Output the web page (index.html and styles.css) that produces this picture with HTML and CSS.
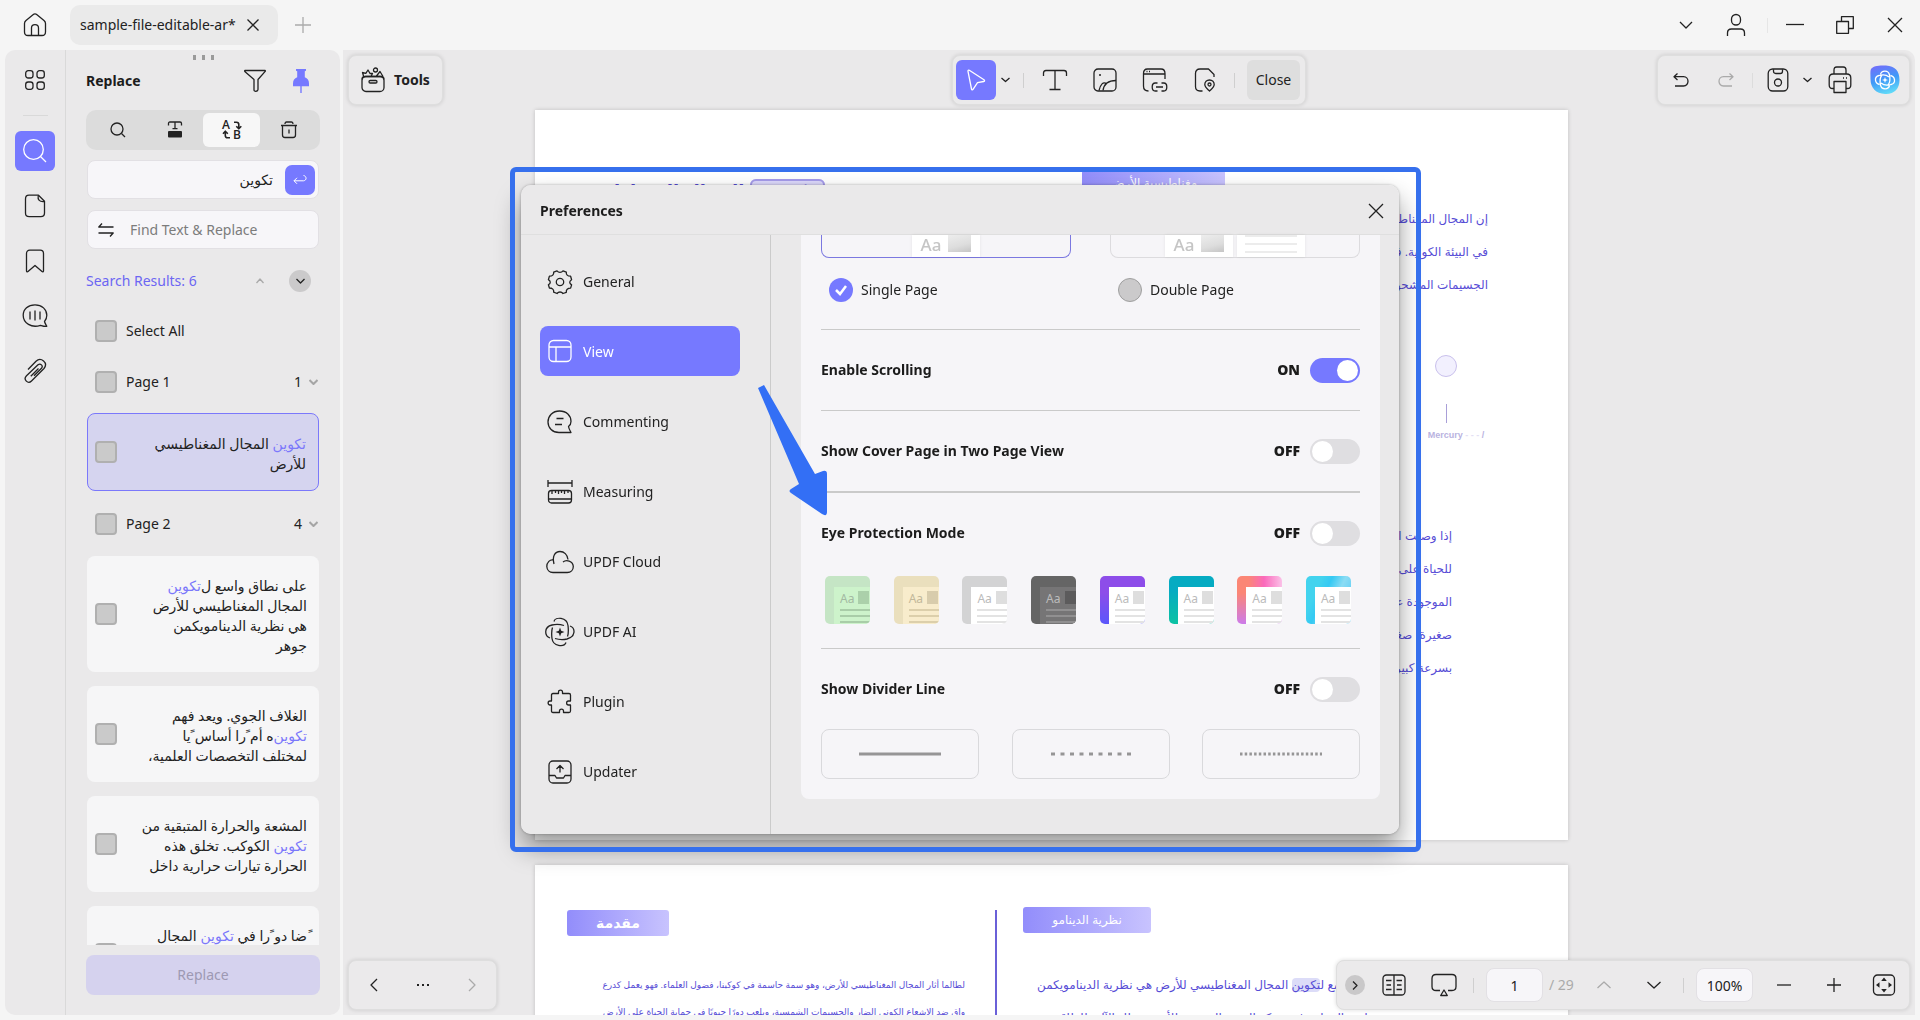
FILE: index.html
```html
<!DOCTYPE html>
<html lang="en">
<head>
<meta charset="utf-8">
<title>sample-file-editable-ar*</title>
<link rel="stylesheet" href="styles.css">
</head>
<body>
<header class="titlebar">
  <button class="win-btn home" aria-label="Home"><svg width="24" height="24" viewBox="0 0 24 24"><path d="M1.500 10.500c0-1.300.5-2.300 1.500-3.100l7-5.700c1.200-1 2.800-1 4 0l7 5.700c1 .8 1.500 1.800 1.500 3.100v8.500c0 2.200-1.300 3.500-3.500 3.500H5c-2.200 0-3.500-1.300-3.500-3.500z"/><path d="M8.500 22v-7c0-4.500 7-4.500 7 0v7"/></svg></button>
  <div class="tab"><span>sample-file-editable-ar*</span><button aria-label="Close tab"><svg width="12" height="12" viewBox="0 0 12 12"><path d="M.5.5l11 11M11.500.5l-11 11"/></svg></button></div>
  <button class="win-btn muted" aria-label="New tab"><svg width="16" height="16" viewBox="0 0 16 16"><path d="M8 0v16M0 8h16"/></svg></button>
  <div class="spacer"></div>
  <button class="win-btn" aria-label="More"><svg width="14" height="8" viewBox="0 0 14 8"><path d="M1 1l6 6 6-6"/></svg></button>
  <button class="win-btn" aria-label="Account"><svg width="20" height="24" viewBox="0 0 20 24"><rect x="5.500" y="1.500" width="9" height="10.500" rx="4.500"/><path d="M1.500 23v-3c0-2.500 1.500-4 4-4h9c2.500 0 4 1.500 4 4v3"/></svg></button>
  <i class="sep title-sep"></i>
  <button class="win-btn" aria-label="Minimize"><svg width="18" height="18" viewBox="0 0 18 18"><path d="M0 8.500h18"/></svg></button>
  <button class="win-btn" aria-label="Restore"><svg width="18" height="18" viewBox="0 0 18 18"><path d="M.7 5.500h11.800v11.800H.7zM5.500 5.500V.7h11.800v11.800h-4.800"/></svg></button>
  <button class="win-btn" aria-label="Close window"><svg width="16" height="16" viewBox="0 0 16 16"><path d="M1 1l14 14M15 1L1 15"/></svg></button>
</header>

<div class="app">
  <aside class="side">
    <nav class="rail">
      <button aria-label="Thumbnails"><svg width="20" height="20" viewBox="0 0 20 20"><rect x=".7" y=".7" width="7.300" height="7.300" rx="2.500"/><rect x="12" y=".7" width="7.300" height="7.300" rx="2.500"/><rect x=".7" y="12" width="7.300" height="7.300" rx="2.500"/><rect x="12" y="12" width="7.300" height="7.300" rx="2.500"/></svg></button>
      <hr>
      <button class="on" aria-label="Search"><svg width="24" height="24" viewBox="0 0 24 24"><circle cx="10.500" cy="10.500" r="9.800"/><path d="M17.500 17.500l5.500 5.500"/></svg></button>
      <button aria-label="Pages"><svg width="22" height="24" viewBox="0 0 22 24"><path d="M5 1.200h9.500l6 6V19c0 2.500-1.200 3.700-3.700 3.700H5.200c-2.500 0-3.700-1.200-3.700-3.700V5c0-2.500 1.200-3.800 3.500-3.800z"/><path d="M14.200 1.500c-.8 4.500 1.500 6.500 6 6"/></svg></button>
      <button aria-label="Bookmarks"><svg width="20" height="24" viewBox="0 0 20 24"><path d="M1.500 22V4.500c0-2 1.200-3.300 3.300-3.300h10.400c2.100 0 3.300 1.300 3.300 3.300V22c0 .8-.8 1.200-1.500.6L10 16.500l-7 6.100c-.7.600-1.500.2-1.500-.6z"/></svg></button>
      <button aria-label="Comments"><svg width="26" height="24" viewBox="0 0 26 24"><path d="M22.500 17.500c.4 1.800 1.400 3.200 2.300 4.800-2.300.4-4.300-.4-6.300-1-9 3-17.300-2-17.300-10C1.200 5 6 .9 13 .9s11.800 4.500 11.800 10.300c0 2.500-.8 4.600-2.300 6.300z"/><path d="M8 7.500v8M13 6.500v10M18 7.500v8"/></svg></button>
      <button aria-label="Attachments"><svg width="24" height="26" viewBox="0 0 24 26"><path d="M5 11.500L13 3.200C18-1.500 25.500 5 21 10.500L8.500 23C5 26.500-.2 21.500 3.500 17.800L15 6.800c2.500-2 5.500 1 3.500 3.500l-7.500 7.500"/><path d="M7.800 18.300L15.500 10.500"/></svg></button>
    </nav>
    <section class="panel">
      <div class="grip"><i></i><i></i><i></i></div>
      <div class="panel-head">
        <h2>Replace</h2>
        <button aria-label="Filter"><svg width="22" height="24" viewBox="0 0 22 24"><path d="M1 1.500h20c.4 0 .5.500.2.900L14 10.500v10c0 2-4 2.500-4 .5V10.500L.8 2.400c-.3-.4-.2-.9.200-.9z"/></svg></button>
        <button class="pin" aria-label="Pin panel"><svg width="18" height="26" viewBox="0 0 18 26"><path class="solid" d="M4 1h10v1.800l-1.200.5v6c2.700 1 4.200 3.200 4.200 6.200v2.700H1v-2.700c0-3 1.500-5.200 4.200-6.200v-6L4 2.800zM8.300 18h1.400v7H8.300z"/></svg></button>
      </div>
      <div class="segments">
        <button aria-label="Find"><svg width="16" height="16" viewBox="0 0 16 16"><circle cx="7" cy="7" r="6"/><path d="M11.500 11.500L15 15"/></svg></button>
        <button aria-label="Redact"><svg width="16" height="18" viewBox="0 0 16 18"><path d="M1.500 4.500v-2C1.500 1.500 2 1 3 1h10c1 0 1.500.5 1.500 1.500v2M8 1v6.500M5.500 7.700h5"/><rect class="solid" x="1" y="10" width="14" height="6.500" rx="1"/></svg></button>
        <button class="on" aria-label="Replace"><svg class="swap" width="20" height="20" viewBox="0 0 20 20"><text x="0" y="9">A</text><text x="11" y="19">B</text><path d="M12 2.200h2.500c1.600 0 2.300.7 2.300 2.300v4M14.300 6.300l2.500 2.500 2.500-2.500M1 13.700l2.300-2.500 2.500 2.500M3.300 11.500V15.500c0 1.600.7 2.300 2.300 2.300H8"/></svg></button>
        <button aria-label="Delete"><svg width="18" height="18" viewBox="0 0 18 18"><path d="M1 4.500h16M5 3c0-1.200.5-2 1.500-2h5c1 0 1.500.8 1.500 2M2.500 4.500V14c0 1.700.7 2.500 2.500 2.500h8c1.800 0 2.500-.8 2.500-2.500V4.500M9 8.500v4"/></svg></button>
      </div>
      <div class="field">
        <input type="text" dir="rtl" lang="ar" aria-label="Find text" value="تكوين">
        <button aria-label="Search"><svg width="14" height="12" viewBox="0 0 14 12"><path d="M10.500 1.500c3.300.5 3.500 5 0 5.300H1M4 3.800l-3 3 3 3"/></svg></button>
      </div>
      <div class="field second">
        <svg width="16" height="14" viewBox="0 0 16 14"><path d="M4 .5L.8 4h14.700M12 13.500l3.200-3.500H.5"/></svg>
        <input type="text" aria-label="Replacement text" placeholder="Find Text &amp; Replace">
      </div>
      <div class="summary">
        <span>Search Results: 6</span>
        <button class="muted" aria-label="Previous result"><svg width="8" height="6" viewBox="0 0 8 6"><path d="M.5 5L4 1l3.500 4"/></svg></button>
        <button class="next" aria-label="Next result"><svg width="9" height="6" viewBox="0 0 9 6"><path d="M.5 1l4 4 4-4"/></svg></button>
      </div>
      <div class="results">
        <label class="group all"><input type="checkbox"><span>Select All</span></label>
        <label class="group"><input type="checkbox"><span>Page 1</span><b>1</b><svg width="9" height="6" viewBox="0 0 9 6"><path d="M.5 1l4 4 4-4"/></svg></label>
        <label class="hit current"><input type="checkbox"><span dir="rtl" lang="ar"><mark>تكوين</mark> المجال المغناطيسي<br>للأرض</span></label>
        <label class="group"><input type="checkbox"><span>Page 2</span><b>4</b><svg width="9" height="6" viewBox="0 0 9 6"><path d="M.5 1l4 4 4-4"/></svg></label>
        <label class="hit"><input type="checkbox"><span dir="rtl" lang="ar">على نطاق واسع ل&zwnj;<mark>تكوين</mark><br>المجال المغناطيسي للأرض<br>هي نظرية الدينامويكمن<br>جوهر</span></label>
        <label class="hit"><input type="checkbox"><span dir="rtl" lang="ar">الغلاف الجوي. ويعد فهم<br><mark>تكوين</mark>&zwnj;ه أم ًرا أساس ًيا<br>لمختلف التخصصات العلمية،</span></label>
        <label class="hit"><input type="checkbox"><span dir="rtl" lang="ar">المشعة والحرارة المتبقية من<br><mark>تكوين</mark> الكوكب. تخلق هذه<br>الحرارة تيارات حرارية داخل</span></label>
        <label class="hit"><input type="checkbox"><span dir="rtl" lang="ar"> ًضا دو ًرا في <mark>تكوين</mark> المجال<br>المغناطيسي للأرض<br>جوهر</span></label>
      </div>
      <button class="replace" disabled>Replace</button>
    </section>
  </aside>

  <main class="work">
    <div class="pages">
      <article class="page first" dir="rtl" lang="ar">
        <div class="col wide">
          <div class="badge low">مغناطيسية الأرض</div>
          <p>إن المجال المغناطيسي للأرض أمر ضروري<br>في البيئة الكونية. فهو يحمي كوكبنا<br>الجسيمات المشحونة القادمة</p>
          <div class="planet"><i></i><b></b><span dir="ltr">Mercury<em> - - - </em>/</span></div>
          <p class="inset">إذا وصلت الجسيمات<br>للحياة على الأرض<br>الموجودة على سطح<br>صغيرة، صغيرة جدا<br>بسرعة كبيرة</p>
        </div>
        <div class="col">
          <h1><mark>تكوين</mark> المجال المغناطيسي</h1>
        </div>
      </article>
      <article class="page second-page" dir="rtl" lang="ar">
        <div class="col wide">
          <div class="badge">نظرية الدينامو</div>
          <p>على نطاق واسع ل<mark>تكوين</mark> المجال المغناطيسي للأرض هي نظرية الدينامويكمن<br>جوهر نظرية الدينامو في حركة الحديد المنصهر للأرض. تظل الآلية للطاقة</p>
        </div>
        <div class="col ruled">
          <div class="badge small">مقدمة</div>
          <p>لطالما أثار المجال المغناطيسي للأرض، وهو سمة حاسمة في كوكبنا، فضول العلماء. فهو يعمل كدرع<br>واق ضد الإشعاع الكوني الضار والجسيمات الشمسية، ويلعب دورًا حيويًا في حماية الحياة على الأرض</p>
        </div>
      </article>
    </div>

    <button class="float tools"><svg width="24" height="26" viewBox="0 0 24 26"><rect x="1" y="9.500" width="22" height="15" rx="4"/><path d="M1 12.500c0-2 1-3 3-3h16c2 0 3 1 3 3M2.500 9L1.500 5.500l3.300.8L7 3l2 3.500 2.500 0L10 9.500M15.500 9l3.500-4.500L22 9.500"/><circle cx="14.500" cy="3" r="2"/><rect x="8" y="13.500" width="8" height="2.500" rx="1.200"/></svg>Tools</button>

    <div class="float edit">
      <button class="sq on" aria-label="Select"><svg width="20" height="22" viewBox="0 0 20 22"><path d="M2 2.300c-.2-1 .5-1.400 1.300-1l14.700 9.500c.9.600.7 1.500-.3 1.700l-6.200 1.200-4.300 6.500c-.6.900-1.500.8-1.700-.2z"/></svg></button>
      <button class="tiny" aria-label="Selection options"><svg width="9" height="6" viewBox="0 0 9 6"><path d="M.5 1l4 3.500 4-3.500"/></svg></button>
      <i class="sep"></i>
      <button class="ib" aria-label="Text"><svg width="26" height="22" viewBox="0 0 26 22"><path d="M1.500 7V4c0-1.500.8-2.500 2.500-2.500h18c1.700 0 2.500 1 2.500 2.500v3M13 1.500v19M7.500 20.500h11"/></svg></button>
      <button class="ib" aria-label="Image"><svg width="24" height="24" viewBox="0 0 24 24"><rect x="1" y="1" width="22" height="22" rx="4"/><circle class="solid" cx="7" cy="7" r="1"/><path d="M6 22.500c1.500-6 4-9.500 8-6.500M10 22.500c1-7 5-10 13-10"/></svg></button>
      <button class="ib" aria-label="Link"><svg width="26" height="24" viewBox="0 0 26 24"><path d="M6.500 23C3 23 1.500 21.500 1.500 18V5.500c0-3 1.200-4.500 4-4.500h13.500c2.800 0 4 1.500 4 4.500V11M1.500 6h21.500M4.500 3.500h1M7 3.500h1M15.500 15h-2.300c-2 0-3 1-3 4s1 4 3 4h2.300M19.500 15h2.300c2 0 3 1 3 4s-1 4-3 4h-2.300M14 19h7"/></svg></button>
      <button class="ib" aria-label="Sticker"><svg width="22" height="24" viewBox="0 0 22 24"><path d="M8.500 23H6c-3 0-4.500-1.500-4.500-4.500V5.500C1.500 2.500 3 1 6 1h8.500l5.500 5.500V9M15.500 12c2.800 0 4.700 2 4.700 4.600 0 2.700-2.700 4.500-4.700 6.400-2-1.900-4.700-3.700-4.700-6.400 0-2.600 1.900-4.600 4.700-4.600z"/><circle cx="15.500" cy="16.500" r="1.500"/></svg></button>
      <i class="sep"></i>
      <button class="close-edit">Close</button>
    </div>

    <div class="float actions">
      <button class="ib" aria-label="Undo"><svg width="16" height="14" viewBox="0 0 16 14"><path d="M4.500.5L1 3.700l3.500 3.200M1 3.700h9.500c6 0 6 9.300 0 9.300H2"/></svg></button>
      <button class="ib muted" aria-label="Redo"><svg width="16" height="14" viewBox="0 0 16 14"><path d="M11.500.5L15 3.700l-3.500 3.200M15 3.700H5.500c-6 0-6 9.300 0 9.300H14"/></svg></button>
      <i class="sep"></i>
      <button class="ib" aria-label="Save"><svg width="22" height="24" viewBox="0 0 22 24"><rect x="1.200" y="1" width="19.600" height="22" rx="4.500"/><path d="M6.500 1.200v2c0 1.500.8 2.300 2.200 2.300h4.600c1.400 0 2.200-.8 2.200-2.300v-2"/><circle cx="11" cy="14.500" r="3.500"/></svg></button>
      <button class="tiny" aria-label="Save options"><svg width="9" height="6" viewBox="0 0 9 6"><path d="M.5 1l4 3.500 4-3.500"/></svg></button>
      <button class="ib print" aria-label="Print"><svg width="24" height="28" viewBox="0 0 24 28"><path d="M6 8V4c0-2 .8-3 2.700-3h6.600c1.900 0 2.700 1 2.700 3v4M6 22.500H4.500c-2.300 0-3.300-1.200-3.300-3.500v-7c0-2.700 1.300-4 4-4h13.600c2.700 0 4 1.300 4 4v7c0 2.300-1 3.500-3.300 3.500H18M6 15.500h12v11H6zM15 12h1M18 12h1"/></svg></button>
      <button class="ib" aria-label="UPDF AI"><svg class="ai" width="30" height="30" viewBox="0 0 30 30"><defs><linearGradient id="aig" x1=".3" y1="0" x2=".6" y2="1"><stop offset="0" stop-color="#7070fa"/><stop offset=".5" stop-color="#3f9af8"/><stop offset="1" stop-color="#62dcf8"/></linearGradient></defs><path class="blob" d="M1 4c2-3 8-4 15-3.500C25 1 29.500 6 29.500 15S24 29.500 15 29 .5 23 .5 14C.5 10 0 6 1 4z"/><g><path d="M10.500 9.500c1-4.500 8-4.500 9 .5.800 4 .3 8-1.500 10M20.500 10.500c4.500 1 6 7.500.5 9-4 1.200-8 .3-10-1.500M19.500 20.500c-1 4.500-8 4.500-9-.5-.8-4-.3-8 1.500-10M9.500 19.500c-4.500-1-6-7.500-.5-9 4-1.200 8-.3 10 1.500"/><path class="star" d="M15 12l.8 2.200 2.200.8-2.200.8L15 18l-.8-2.200L12 15l2.200-.8z"/></g></svg></button>
    </div>

    <div class="float history">
      <button class="ib" aria-label="Back"><svg width="8" height="14" viewBox="0 0 8 14"><path d="M7 1L1 7l6 6"/></svg></button>
      <button class="ib" aria-label="More views"><svg width="14" height="4" viewBox="0 0 14 4"><path class="solid" d="M1 1h2v2H1zM6 1h2v2H6zM11 1h2v2h-2z"/></svg></button>
      <button class="ib muted" aria-label="Forward"><svg width="8" height="14" viewBox="0 0 8 14"><path d="M1 1l6 6-6 6"/></svg></button>
    </div>

    <div class="float status">
      <button class="round" aria-label="Collapse"><svg width="6" height="9" viewBox="0 0 6 9"><path d="M1 .5l4 4-4 4"/></svg></button>
      <button class="ib" aria-label="Reading view"><svg width="24" height="22" viewBox="0 0 24 22"><rect x="1" y="1" width="22" height="20" rx="3.500"/><path d="M12 1v20M4 6.500h5.500M4.500 11h4.500M4 15.500h5.500M14.500 6.500H20M15 11h4.500M14.500 15.500H20"/></svg></button>
      <button class="ib" aria-label="Slideshow"><svg width="26" height="24" viewBox="0 0 26 24"><path d="M9 17.500H5c-2.700 0-4-1.300-4-4V5.500c0-2.700 1.300-4 4-4h16c2.700 0 4 1.300 4 4v8c0 2.700-1.300 4-4 4h-4M13 17l3.300 5.500H9.700z"/></svg></button>
      <i class="sep"></i>
      <input type="text" class="num" aria-label="Page number" value="1">
      <span class="total">/ 29</span>
      <button class="ib muted" aria-label="Previous page"><svg width="14" height="8" viewBox="0 0 14 8"><path d="M.5 7L7 1l6.500 6"/></svg></button>
      <button class="ib" aria-label="Next page"><svg width="14" height="8" viewBox="0 0 14 8"><path d="M.5 1L7 7l6.500-6"/></svg></button>
      <i class="sep"></i>
      <input type="text" class="num zoom" aria-label="Zoom" value="100%">
      <button class="ib" aria-label="Zoom out"><svg width="14" height="14" viewBox="0 0 14 14"><path d="M0 7h14"/></svg></button>
      <button class="ib" aria-label="Zoom in"><svg width="14" height="14" viewBox="0 0 14 14"><path d="M0 7h14M7 0v14"/></svg></button>
      <button class="ib" aria-label="Fit page"><svg width="24" height="22" viewBox="0 0 24 22"><rect x="1.500" y="1" width="21" height="20" rx="4"/><path class="solid" d="M12 3.500l2.800 3.500H9.200zM12 18.500l2.800-3.500H9.200zM4 11l3.500-2.800v5.600zM20 11l-3.500-2.800v5.600z"/></svg></button>
    </div>
  </main>
</div>

<div class="overlay">
  <div class="dialog-wrap">
    <section class="dialog" role="dialog" aria-labelledby="pref">
      <header><h2 id="pref">Preferences</h2><button aria-label="Close preferences"><svg width="16" height="16" viewBox="0 0 16 16"><path d="M1 1l14 14M15 1L1 15"/></svg></button></header>
      <div class="dialog-body">
        <nav>
          <button><svg width="26" height="26" viewBox="0 0 26 26"><path d="M10 1.800c1.500 2 4.500 2 6 0l3.300 1.400c-.3 2.500 1.200 4 4.300 4l1 3.500c-2.500 1.500-2.500 3.600 0 5.200l-1 3.200c-3 0-4.600 1.600-4.300 4.300L16 24.500c-1.500-2-4.500-2-6 0l-3.300-1.300c.3-2.600-1.300-4.200-4.300-4.200l-1-3.200c2.500-1.500 2.500-3.700 0-5.200l1-3.400c3 0 4.600-1.600 4.300-4z"/><circle cx="13" cy="13" r="3.700"/></svg>General</button>
          <button class="on"><svg width="26" height="26" viewBox="0 0 26 26"><rect x="2" y="1.500" width="22" height="21" rx="4.500"/><path d="M2 8h22M9 8v14.500"/></svg>View</button>
          <button><svg width="26" height="26" viewBox="0 0 26 26"><path d="M21.500 17.500c.3 2 1.200 3.800 2.500 6H12C5.500 23.500 1 19 1 13S5.500 2 12.500 2 24 6.500 24 12.500c0 2-.8 3.700-2.500 5z"/><path d="M9.500 9.500h7M8 15.500h7"/></svg>Commenting</button>
          <button><svg width="26" height="26" viewBox="0 0 26 26"><path d="M1 1v7M25 1v7M1 4h24"/><rect x="1.500" y="11.500" width="23" height="12.500" rx="3"/><path d="M2 20h22M5 12v3M8.500 12v2M11.500 12v3M14.500 12v2M17.500 12v3M21 12v2"/></svg>Measuring</button>
          <button><svg width="28" height="26" viewBox="0 0 28 26"><path d="M8 15c-2-8 1-12.500 6-12.500 4 0 7.500 3 8 8M17 13c3-2.500 10-1.500 10.300 4.500 0 3.500-2.500 6-6 6H7c-3.500 0-6-2.500-6.200-6C.8 13.500 4 10 7.500 11"/></svg>UPDF Cloud</button>
          <button><svg width="30" height="30" viewBox="0 0 30 30"><path d="M9 4.500C10-.5 22 0 23 8.500c.5 4 .5 8-.5 11M25 9c5.500 2 6 10.500-3 13-4 1-8 .8-12-.5M21 25.500c-2 5-13 4-14-4-.5-4-.5-8 .5-11M5 21C-.5 19-1.500 10 7 8c4-1 8-.8 12 .5" /><path class="solid" d="M15 10.500l1.200 3.300 3.300 1.200-3.300 1.200L15 19.500l-1.200-3.300-3.300-1.200 3.300-1.200z"/></svg>UPDF AI</button>
          <button><svg width="26" height="26" viewBox="0 0 26 26"><path d="M4.500 6c0-1 .5-1.500 1.500-1.500h5.500V3c0-2.500 4-2.500 4 0v1.500H22c1 0 1.500.5 1.500 1.500v6h-2c-2.500 0-2.500 4 0 4h2v6c0 1-.5 1.500-1.500 1.500h-5.500V22c0-2.500-4-2.500-4 0v1.500H6c-1 0-1.500-.5-1.500-1.500v-6H3c-2.500 0-2.500-4 0-4h1.500z"/></svg>Plugin</button>
          <button><svg width="26" height="26" viewBox="0 0 26 26"><rect x="2" y="2" width="22" height="22" rx="4"/><path d="M2 16.500h6l1.500 2.500h7l1.500-2.500h6M13 13.500V7M9.500 10L13 6.500l3.500 3.500"/></svg>Updater</button>
        </nav>
        <div class="content">
          <div class="card">
            <div class="previews">
              <div class="preview chosen"><div class="sheet"><b>Aa</b><i></i></div></div>
              <div class="preview"><div class="sheet"><b>Aa</b><i></i></div><div class="sheet lines"></div></div>
            </div>
            <div class="choices">
              <label><input type="radio" name="layout" checked><span>Single Page</span></label>
              <label><input type="radio" name="layout"><span>Double Page</span></label>
            </div>
            <label class="row"><span>Enable Scrolling</span><b>ON</b><input type="checkbox" checked></label>
            <label class="row"><span>Show Cover Page in Two Page View</span><b>OFF</b><input type="checkbox"></label>
            <label class="row heavy"><span>Eye Protection Mode</span><b>OFF</b><input type="checkbox"></label>
            <div class="themes">
              <button class="theme green" aria-label="Green"><span>Aa<i></i></span></button>
              <button class="theme sand" aria-label="Sand"><span>Aa<i></i></span></button>
              <button class="theme grey" aria-label="Grey"><span>Aa<i></i></span></button>
              <button class="theme dark" aria-label="Dark"><span>Aa<i></i></span></button>
              <button class="theme violet" aria-label="Violet"><span>Aa<i></i></span></button>
              <button class="theme teal" aria-label="Teal"><span>Aa<i></i></span></button>
              <button class="theme pink" aria-label="Pink"><span>Aa<i></i></span></button>
              <button class="theme sky" aria-label="Sky"><span>Aa<i></i></span></button>
            </div>
            <label class="row"><span>Show Divider Line</span><b>OFF</b><input type="checkbox"></label>
            <div class="dividers">
              <button aria-label="Solid"><svg width="84" height="4" viewBox="0 0 84 4"><path d="M1 2h82"/></svg></button>
              <button aria-label="Dashed"><svg width="84" height="4" viewBox="0 0 84 4"><path d="M2 2h82" stroke-dasharray="4 5.500"/></svg></button>
              <button aria-label="Dotted"><svg width="84" height="4" viewBox="0 0 84 4"><path d="M1 2h82" stroke-dasharray="2.500 2.200"/></svg></button>
            </div>
          </div>
        </div>
      </div>
    </section>
    <div class="callout"></div>
    <svg class="arrow" width="74" height="134" viewBox="0 0 74 134"><path d="M2 4l6-3 51 89 8-3q4-1 4 3v38q0 5-5 2L35 109q-3-2 0-4l8-5z"/></svg>
  </div>
</div>
</body>
</html>
```
FILE: styles.css
```css
* { box-sizing: border-box; }
body {
  margin: 0;
  height: 100vh;
  display: flex;
  flex-direction: column;
  overflow: hidden;
  background: #f5f5f5;
  color: #222;
  font: 14px/20px "Noto Sans", "DejaVu Sans", sans-serif;
}
button, input { font: inherit; color: inherit; }
button {
  display: flex;
  align-items: center;
  justify-content: center;
  padding: 0;
  border: 0;
  background: none;
  flex: none;
}
h1, h2, p { margin: 0; }
i, em { font-style: normal; }
mark { background: none; color: #7b78fb; }
svg { fill: none; stroke: #222; stroke-width: 1.3; stroke-linejoin: round; flex: none; }
svg .solid { fill: #222; stroke: none; }
.muted svg { stroke: #aaa; }
.sep { width: 1px; height: 15px; background: #cfcfcf; flex: none; }
.spacer { flex: 1; }

.titlebar { display: flex; align-items: center; height: 50px; flex: none; }
.win-btn { width: 50px; height: 50px; }
.home { width: 70px; }
.tab {
  display: flex;
  align-items: center;
  justify-content: space-between;
  width: 208px;
  height: 40px;
  padding: 0 19px 0 10px;
  border-radius: 10px;
  background: #eaeaea;
}
.title-sep { margin: 0 2px 0 6px; background: #e6e6e6; }

.app { display: flex; flex: 1; min-height: 0; gap: 3px; padding: 0 5px 5px; }
.side { display: flex; width: 335px; flex: none; border-radius: 10px; background: #eae9ea; }
.rail {
  display: flex;
  flex-direction: column;
  align-items: center;
  gap: 15px;
  width: 61px;
  padding-top: 10px;
  border-right: 1px solid #d9d9d9;
}
.rail button { width: 40px; height: 40px; border-radius: 6px; }
.rail hr { width: 25px; height: 1px; margin: 0; border: 0; background: #d9d9d9; }
.on svg { stroke: #fff; }
.rail .on, .sq.on, .dialog nav .on { background: #7679ff; }

.panel { display: flex; flex-direction: column; flex: 1; min-width: 0; padding: 0 20px 20px; }
.grip { display: flex; justify-content: center; gap: 6px; padding-top: 5px; }
.grip i { width: 3px; height: 5px; background: #9a9a9a; }
.panel-head { display: flex; align-items: center; height: 42px; gap: 14px; padding-right: 3px; }
h2 { flex: 1; font-size: 14px; font-weight: 700; color: #1c1c1c; }
.panel-head button { width: 32px; height: 32px; }
.panel-head .pin .solid { fill: #7679ff; }
.segments { display: flex; height: 40px; margin-top: 8px; padding: 3px; border-radius: 10px; background: #dcdcdc; }
.segments button { flex: 1; border-radius: 6px; }
.segments .on { background: #f7f7f7; }
.segments .on svg { stroke: #222; stroke-width: 1.6; }
.swap { overflow: visible; }
.swap text { fill: #222; stroke: none; font: 600 12px "Open Sans", sans-serif; }
.field {
  display: flex;
  align-items: center;
  height: 39px;
  margin: 10px 1px 0;
  padding: 0 3px 0 10px;
  border: 1px solid #e2e0e4;
  border-radius: 8px;
  background: #f7f6f9;
}
.field input { flex: 1; min-width: 0; padding: 1px 12px 0 0; border: 0; background: none; outline: 0; }
.field button { width: 30px; height: 30px; border-radius: 7px; background: #7679ff; }
.field button svg { stroke: #fff; stroke-width: 1; }
.second { gap: 16px; margin-top: 11px; }
.second input::placeholder { color: #7c7c7c; opacity: 1; }
.summary { display: flex; align-items: center; height: 40px; margin-top: 12px; padding-right: 9px; }
.summary span { flex: 1; color: #6c66f3; }
.summary button { width: 22px; height: 22px; margin-left: 18px; border-radius: 50%; }
.summary .next { background: #cbcacb; }
.results { flex: 1; min-height: 0; overflow: hidden; padding: 0 1px; }
.results input {
  appearance: none;
  width: 22px;
  height: 22px;
  margin: 0 9px 0 0;
  border: 2px solid #b0b0b0;
  border-radius: 4px;
  background: #cacaca;
  flex: none;
}
.group { display: flex; align-items: center; height: 63px; padding: 0 0 0 8px; }
.group.all { height: 60px; margin-bottom: -11px; }
.group span { flex: 1; }
.group b { font-weight: 400; }
.group svg { margin: 0 1px 0 7px; stroke: #a5a5a5; stroke-width: 2; }
.group:nth-child(4) { height: 64px; }
.hit {
  display: flex;
  align-items: center;
  margin-bottom: 14px;
  padding: 18px 12px 18px 8px;
  border-radius: 8px;
  background: #f6f6f7;
}
.hit span { flex: 1; padding-top: 2px; margin-bottom: -2px; white-space: nowrap; }
.current { margin-bottom: 1px; padding-left: 7px; border: 1px solid #7b78fb; background: #d5d4ef; }
.replace { height: 40px; margin-top: 10px; border-radius: 8px; background: #d5d2ee; color: #9d99b3; }

.work { position: relative; flex: 1; min-width: 0; overflow: hidden; border-radius: 0 10px 0 0; background: #eae9ea; }
.pages { display: grid; grid-template-columns: 192fr 1033px 347fr; row-gap: 25px; padding-top: 60px; }
.page {
  grid-column: 2;
  display: grid;
  grid-template-columns: 571px 1fr;
  height: 730px;
  background: #fff;
  box-shadow: 0 0 4px rgba(0, 0, 0, .18);
  color: #574dd6;
  font: 12px/33px "Liberation Sans", "DejaVu Sans", sans-serif;
}
.page p { white-space: nowrap; }
.page .wide { padding-right: 80px; }
.badge {
  display: flex;
  align-items: center;
  justify-content: center;
  width: 128px;
  height: 26px;
  border-radius: 3px;
  background: linear-gradient(90deg, #928dfb, #c8c3fe);
  color: #fff;
  font-size: 12px;
}
.badge.small { width: 102px; font-size: 14px; font-weight: 700; }
.badge.low { width: 143px; margin: 60px 263px 7px 0; }
.planet { display: flex; flex-direction: column; align-items: center; width: 60px; margin: 53px 2px 75px 0; }
.planet i { width: 22px; height: 22px; margin-right: 20px; border: 1px solid #c9c0ec; border-radius: 50%; background: #f2f0fe; }
.planet b { width: 1px; height: 19px; margin: 27px 20px 2px 0; background: #a99fd8; }
.planet span { font-size: 9px; line-height: 20px; font-weight: 700; color: #b9b3df; white-space: nowrap; }
.planet em { color: #e4e0f4; }
.inset { padding-right: 36px; }
h1 { margin: 66px 172px 0 0; font: 700 18px/32px "Liberation Sans", "DejaVu Sans", sans-serif; white-space: nowrap; }
h1 mark { padding: 1px 10px 0; border: 2px solid #a59bea; border-radius: 6px; background: #dcd8fb; color: #574dd6; }
.second-page { padding-top: 42px; }
.second-page .wide { padding-right: 171px; }
.second-page .wide .badge { margin-right: 246px; }
.second-page .wide p { margin-right: -10px; padding-top: 36px; }
.second-page .wide mark { border-radius: 4px; background: #dcdcf8; color: inherit; }
.ruled { margin-top: 3px; padding-right: 30px; border-right: 2px solid #6a60d8; }
.ruled .badge { margin-right: 296px; }
.ruled p { padding-top: 36px; font-size: 9px; line-height: 27px; }

.float {
  position: absolute;
  display: flex;
  align-items: center;
  height: 50px;
  border: 1px solid #dedede;
  border-radius: 8px;
  background: #ebeaeb;
  box-shadow: 0 0 4px rgba(0, 0, 0, .14);
}
.tools { top: 5px; left: 5px; width: 95px; gap: 9px; font-weight: 700; }
.edit { top: 5px; left: 609px; width: 354px; padding-left: 3px; }
.sq { width: 40px; height: 40px; border-radius: 6px; }
.tiny { width: 18px; height: 40px; }
.edit .ib { width: 50px; height: 40px; }
.edit .sep { margin: 0 6px 0 9px; }
.edit .ib + .sep { margin: 0 12px 0 4px; }
.close-edit { width: 53px; height: 40px; border-radius: 6px; background: #dedede; }
.actions { top: 5px; right: 5px; width: 253px; }
.actions .ib { width: 45px; height: 40px; }
.actions .tiny { width: 15px; }
.actions .print { margin-left: 2px; }
.actions .sep { margin: 0 2px 0 4px; background: #dcdcdc; }
.ai .blob { fill: url(#aig); stroke: none; }
.ai { stroke: #fff; }
.ai .star { fill: #fff; stroke: none; }
.history { bottom: 5px; left: 5px; width: 149px; }
.history .ib { width: 49px; height: 40px; }
.status { bottom: 5px; right: 5px; width: 574px; padding-left: 8px; }
.status .ib { width: 50px; height: 40px; }
.round { width: 20px; height: 20px; margin-right: 4px; border-radius: 50%; background: #c9c8c9; }
.status .sep { margin: 0 12px 0 4px; }
.num { width: 57px; height: 34px; padding: 0; border: 1px solid #e2e0e4; border-radius: 8px; background: #f7f6f9; text-align: center; }
.num.zoom { margin-right: 6px; }
.total { width: 36px; padding-left: 6px; color: #aaa; white-space: nowrap; }

.overlay { position: fixed; inset: 0; display: flex; align-items: center; justify-content: center; padding-bottom: 1px; }
.dialog-wrap { position: relative; width: 878px; }
.dialog-wrap::before {
  content: "";
  position: absolute;
  inset: 0;
  border-radius: 10px;
  box-shadow: 0 14px 26px rgba(0, 0, 0, .4), 0 0 3px rgba(0, 0, 0, .3);
}
.dialog { position: relative; overflow: hidden; border-radius: 10px; background: #eae9ea; }
.dialog header { display: flex; align-items: center; height: 50px; padding: 2px 15px 0 19px; border-bottom: 1px solid #dfdfdf; }
.dialog-body { display: flex; }
.dialog nav {
  display: flex;
  flex-direction: column;
  flex: none;
  gap: 20px;
  width: 250px;
  padding: 21px 0 0 19px;
  border-right: 1px solid #cbcbcb;
}
.dialog nav button { justify-content: flex-start; width: 200px; height: 50px; padding-top: 2px; border-radius: 8px; }
.dialog nav svg { width: 40px; margin-right: 3px; }
.dialog nav .on { color: #fff; }
.content { flex: 1; min-width: 0; padding: 0 19px 35px 30px; }
.card { padding: 0 20px 20px; border-radius: 0 0 8px 8px; background: #f6f5f8; }
.previews { display: grid; grid-template-columns: 250px 250px; justify-content: space-between; }
.preview {
  display: flex;
  justify-content: center;
  gap: 4px;
  height: 23px;
  border: 1px solid #dcdbde;
  border-top: 0;
  border-radius: 0 0 8px 8px;
}
.preview.chosen { border-color: #7b78e0; }
.sheet { display: flex; justify-content: center; gap: 7px; width: 68px; background: #fff; box-shadow: 0 0 3px rgba(0, 0, 0, .08); }
.sheet b { font-size: 17px; line-height: 20px; font-weight: 500; color: #c5c5c5; }
.sheet i { width: 23px; height: 17px; background: linear-gradient(165deg, #ededed, #ddd 60%, #c5c5c5); }
.sheet.lines { background: repeating-linear-gradient(#ececec 0 2px, #fff 2px 8px) 50% 0 / 52px 100% no-repeat #fff; }
.choices { display: flex; height: 71px; padding: 0 0 8px; }
.choices label { display: flex; align-items: center; flex: none; width: 289px; padding-left: 8px; }
.choices label + label { width: 250px; }
.choices input { appearance: none; width: 24px; height: 24px; margin: 0 8px 0 0; border: 1px solid #9f9f9f; border-radius: 50%; background: #cbcacb; }
.choices input:checked {
  border: 0;
  background: #7679ff url("data:image/svg+xml,%3Csvg xmlns='http://www.w3.org/2000/svg' width='24' height='24'%3E%3Cpath d='M7 12l4 4 6-8' fill='none' stroke='%23fff' stroke-width='2.500'/%3E%3C/svg%3E");
}
.row { display: flex; align-items: center; height: 81px; border-top: 1px solid #cacaca; color: #1c1c1c; font-weight: 700; }
.row.heavy { height: 82px; border-top-width: 2px; }
.row span { flex: 1; }
.row input {
  appearance: none;
  display: flex;
  width: 50px;
  height: 25px;
  margin: 0 0 0 10px;
  padding: 2px;
  border-radius: 13px;
  background: #dfdee1;
}
.row input::before { content: ""; width: 21px; height: 21px; border-radius: 50%; background: #fff; }
.row input:checked { justify-content: flex-end; background: #7679ff; }
.themes { display: flex; justify-content: space-between; padding: 3px 9px 24px 4px; }
.theme { width: 45px; height: 48px; padding: 11px 0 0 9px; border-radius: 5px; overflow: hidden; background: var(--cover); }
.theme span {
  display: flex;
  gap: 4px;
  width: 36px;
  height: 37px;
  padding: 4px 0 0 6px;
  background: linear-gradient(var(--line), var(--line)) 6px 22px / 30px 2px no-repeat,
    linear-gradient(var(--line), var(--line)) 6px 28px / 30px 2px no-repeat,
    linear-gradient(var(--line), var(--line)) 6px 34px / 30px 2px no-repeat, var(--paper, #fff);
  color: var(--ink, #bbb);
  font-size: 12px;
  line-height: 16px;
  --line: #e3e3e3;
}
.theme i { width: 11px; height: 13px; background: var(--pic, #dedede); flex: none; }
.green { --cover: #c5e5c5; --paper: #cdf3cb; --ink: #a3b9a2; --pic: #abd0aa; }
.green span { --line: #a9cda8; }
.sand { --cover: #eadfbd; --paper: #f8eccc; --ink: #c2b89a; --pic: #d8ccac; }
.sand span { --line: #dccfab; }
.grey { --cover: #d3d3d4; }
.dark { --cover: #656565; --paper: #767576; --ink: #bcbcbc; --pic: #5c5b5c; }
.dark span { --line: #919091; }
.violet { --cover: linear-gradient(#8d4de9 35%, #5b57fb); }
.teal { --cover: linear-gradient(#06abc2 30%, #0cc2a3); }
.pink { --cover: linear-gradient(90deg, transparent 25%, #fa69bb 60%, #fbc1e8) 0 0 / 100% 11px no-repeat, linear-gradient(#fb8675 35%, #cc7bea); }
.sky { --cover: linear-gradient(115deg, #42d3ee 25%, #35c9f3 40%, #8bdcf4 60%, #3fc3f6); }
.dividers { display: grid; grid-template-columns: repeat(3, 158px); justify-content: space-between; }
.dividers button { height: 50px; border: 1px solid #d9d9dc; border-radius: 8px; }
.dividers svg { stroke: #969596; stroke-width: 3; }
.callout { position: absolute; inset: -18px -22px -18px -11px; border: 5px solid #3670ed; border-radius: 6px; }
.arrow { position: absolute; left: 235px; top: 199px; stroke: none; fill: #336ff5; }
```
